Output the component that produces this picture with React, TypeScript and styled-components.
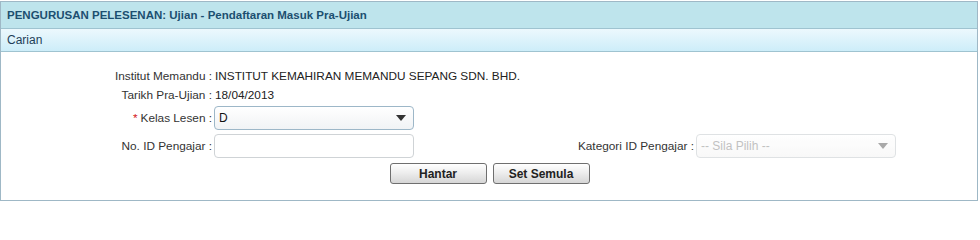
import React from 'react';
import styled, { createGlobalStyle } from 'styled-components';

const GlobalStyle = createGlobalStyle`
    html, body {
        margin: 0;
        padding: 0;
        background: #ffffff;
    }
    body {
        font-family: 'Liberation Sans', Arial, sans-serif;
        font-size: 12px;
        color: #333333;
    }
`;

const Panel = styled.div`
    box-sizing: border-box;
    width: 978px;
    height: 200px;
    margin-top: 1px;
    border: 1px solid #9fb8c6;
    display: flex;
    flex-direction: column;
`;

const PanelTitle = styled.div`
    height: 26px;
    line-height: 26px;
    padding-left: 6px;
    background: #bee4ec;
    border-bottom: 1px solid #9fc3d0;
    color: #1c4f70;
    font-weight: bold;
    font-size: 11.5px;
`;

const SectionTitle = styled.div`
    height: 22px;
    line-height: 22px;
    padding-left: 6px;
    background: linear-gradient(to bottom, #ecf8fd 0%, #cdedf9 100%);
    border-bottom: 1px solid #9fc3d0;
    color: #1f3f58;
    font-size: 12px;
`;

const Body = styled.div`
    flex: 1;
    padding-top: 15px;
`;

const FormGrid = styled.div`
    display: grid;
    grid-template-columns: 213px 270px 212px 200px;
    grid-auto-rows: auto;
    align-items: start;
`;

const Label = styled.div<{ $tall?: boolean }>`
    text-align: right;
    padding-right: 2px;
    line-height: ${(p) => (p.$tall ? '26px' : '19px')};
    white-space: nowrap;
    font-size: 11.8px;
    color: #333333;
`;

const Value = styled.div<{ $span?: number }>`
    grid-column: span ${(p) => p.$span ?? 1};
    line-height: 19px;
    padding-left: 1px;
    white-space: nowrap;
    font-size: 11.8px;
    color: #222222;
`;

const FieldCell = styled.div`
    display: flex;
    align-items: flex-start;
    height: 28px;
    padding-top: 1px;
    box-sizing: border-box;
`;

const Star = styled.span`
    color: #d42020;
    margin-right: 3px;
`;

const SelectWrap = styled.div`
    position: relative;
    width: 200px;
    height: 24px;
`;

const Select = styled.select<{ $disabled?: boolean }>`
    appearance: none;
    -webkit-appearance: none;
    box-sizing: border-box;
    width: 200px;
    height: 24px;
    margin: 0;
    padding: 0 0 0 4px;
    border: 1px solid ${(p) => (p.$disabled ? '#d2d6d9' : '#9db7c8')};
    border-radius: 4px;
    background: ${(p) =>
        p.$disabled ? 'linear-gradient(to bottom, #ffffff, #f6f6f6)' : 'linear-gradient(to bottom, #ffffff, #f1f3f5)'};
    font-family: 'Liberation Sans', Arial, sans-serif;
    font-size: 12px;
    color: ${(p) => (p.$disabled ? '#a8a8a8' : '#111111')};
    outline: none;
`;

const Arrow = styled.span<{ $disabled?: boolean }>`
    position: absolute;
    right: 8px;
    top: 9px;
    width: 0;
    height: 0;
    border-left: 5px solid transparent;
    border-right: 5px solid transparent;
    border-top: 6px solid ${(p) => (p.$disabled ? '#a9a9a9' : '#333333')};
    pointer-events: none;
`;

const TextInput = styled.input`
    box-sizing: border-box;
    width: 200px;
    height: 24px;
    margin: 0;
    padding: 0 4px;
    border: 1px solid #cfd3d6;
    border-radius: 4px;
    background: #ffffff;
    font-family: 'Liberation Sans', Arial, sans-serif;
    font-size: 12px;
    outline: none;
`;

const ButtonRow = styled.div`
    display: flex;
    justify-content: center;
    gap: 6px;
    margin-top: 2px;
    padding-left: 1px;
`;

const Button = styled.button`
    box-sizing: border-box;
    width: 97px;
    height: 21px;
    padding: 0;
    border: 1px solid #6f6f6f;
    border-radius: 3px;
    background: linear-gradient(to bottom, #ffffff 0%, #eeeeee 45%, #d6d6d6 100%);
    font-family: 'Liberation Sans', Arial, sans-serif;
    font-size: 12px;
    font-weight: bold;
    color: #222222;
`;

const DropDown = ({ value, disabled }: { value: string; disabled?: boolean }) => (
    <SelectWrap>
        <Select $disabled={disabled} disabled={disabled} defaultValue={value}>
            <option value={value}>{value}</option>
        </Select>
        <Arrow $disabled={disabled} />
    </SelectWrap>
);

export default function App() {
    return (
        <>
            <GlobalStyle />
            <Panel>
                <PanelTitle>PENGURUSAN PELESENAN: Ujian - Pendaftaran Masuk Pra-Ujian</PanelTitle>
                <SectionTitle>Carian</SectionTitle>
                <Body>
                    <FormGrid>
                        <Label>Institut Memandu :</Label>
                        <Value $span={3}>INSTITUT KEMAHIRAN MEMANDU SEPANG SDN. BHD.</Value>

                        <Label>Tarikh Pra-Ujian :</Label>
                        <Value $span={3}>18/04/2013</Value>

                        <Label $tall>
                            <Star>*</Star>Kelas Lesen :
                        </Label>
                        <FieldCell>
                            <DropDown value="D" />
                        </FieldCell>
                        <div />
                        <div />

                        <Label $tall>No. ID Pengajar :</Label>
                        <FieldCell>
                            <TextInput type="text" />
                        </FieldCell>
                        <Label $tall>Kategori ID Pengajar :</Label>
                        <FieldCell>
                            <DropDown value="-- Sila Pilih --" disabled />
                        </FieldCell>
                    </FormGrid>
                    <ButtonRow>
                        <Button>Hantar</Button>
                        <Button>Set Semula</Button>
                    </ButtonRow>
                </Body>
            </Panel>
        </>
    );
}
